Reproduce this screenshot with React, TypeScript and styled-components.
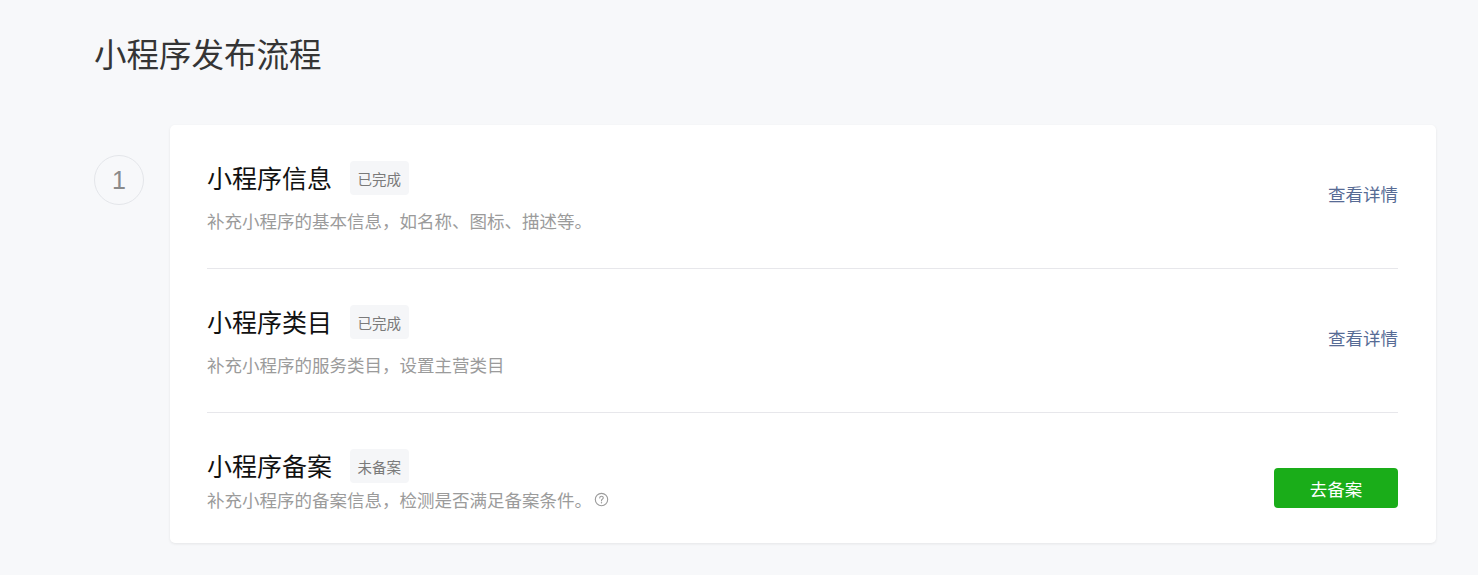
import React from "react";
import styled, { createGlobalStyle } from "styled-components";

const GlobalStyle = createGlobalStyle`
  html, body {
    margin: 0;
    padding: 0;
    background: #f7f8fa;
    font-family: "Noto Sans CJK SC", "Noto Sans", sans-serif;
  }
  * { box-sizing: border-box; }
`;

const Page = styled.div`
  padding: 30px 42px 32px 94px;
  min-height: 575px;
`;

const Heading = styled.h1`
  margin: 0 0 49px 0;
  font-size: 32.5px;
  line-height: 46px;
  font-weight: 400;
  color: #353535;
`;

const Step = styled.div`
  display: flex;
  align-items: flex-start;
  gap: 26px;
`;

const StepNumber = styled.div`
  flex: none;
  width: 50px;
  height: 50px;
  margin-top: 30px;
  border: 1.5px solid #e4e6ea;
  border-radius: 50%;
  display: flex;
  align-items: center;
  justify-content: center;
  font-family: "Liberation Sans", Arial, sans-serif;
  font-size: 25px;
  color: #8a8a8a;
`;

const Card = styled.div`
  flex: 1;
  background: #fff;
  border-radius: 5px;
  box-shadow: 0 1px 3px rgba(0, 0, 0, 0.08);
  padding: 0 38px 0 37px;
`;

const Row = styled.div<{ $last?: boolean }>`
  display: flex;
  align-items: ${(p) => (p.$last ? "flex-end" : "center")};
  justify-content: space-between;
  padding: ${(p) => (p.$last ? "36px 0 31px" : "36px 0 35px")};
  border-bottom: ${(p) => (p.$last ? "none" : "1px solid #e7e7eb")};
`;

const Info = styled.div`
  display: flex;
  flex-direction: column;
`;

const TitleLine = styled.div`
  display: flex;
  align-items: center;
  height: 34px;
`;

const Title = styled.span`
  font-size: 25px;
  line-height: 34px;
  color: #111;
  margin-top: -3px;
`;

const Tag = styled.span`
  margin-left: 18px;
  height: 34px;
  padding: 0 7.5px;
  display: inline-flex;
  align-items: center;
  background: #f5f6f8;
  border-radius: 4px;
  font-size: 14.5px;
  color: #7a7a7a;
`;

const Desc = styled.div<{ $compact?: boolean }>`
  margin-top: ${(p) => (p.$compact ? "4px" : "13px")};
  font-size: 17.5px;
  line-height: 25px;
  color: #9b9b9b;
  display: flex;
  align-items: center;
`;

const HelpIcon = styled.svg`
  margin-left: 2px;
  width: 15px;
  height: 15px;
`;

const Link = styled.a`
  margin-bottom: 7px;
  font-size: 17.5px;
  color: #576b95;
  text-decoration: none;
  cursor: pointer;
`;

const PrimaryButton = styled.button`
  width: 124px;
  height: 40px;
  margin-bottom: 4px;
  border: none;
  border-radius: 4px;
  background: #1aad19;
  color: #fff;
  font-family: inherit;
  font-size: 17.5px;
  cursor: pointer;
`;

const Help = () => (
  <HelpIcon viewBox="0 0 16 16">
    <circle cx="8" cy="8" r="6.6" fill="none" stroke="#9b9b9b" strokeWidth="1.2" />
    <path
      d="M6.1 6.4c0-1.1.85-1.9 1.9-1.9s1.9.75 1.9 1.75c0 .8-.5 1.15-1.05 1.5-.5.3-.85.6-.85 1.25v.4"
      fill="none"
      stroke="#9b9b9b"
      strokeWidth="1.2"
      strokeLinecap="round"
    />
    <circle cx="8" cy="11.4" r="0.75" fill="#9b9b9b" />
  </HelpIcon>
);

export default function App() {
  return (
    <>
      <GlobalStyle />
      <Page>
        <Heading>小程序发布流程</Heading>
        <Step>
          <StepNumber>1</StepNumber>
          <Card>
            <Row>
              <Info>
                <TitleLine>
                  <Title>小程序信息</Title>
                  <Tag>已完成</Tag>
                </TitleLine>
                <Desc>补充小程序的基本信息，如名称、图标、描述等。</Desc>
              </Info>
              <Link>查看详情</Link>
            </Row>
            <Row>
              <Info>
                <TitleLine>
                  <Title>小程序类目</Title>
                  <Tag>已完成</Tag>
                </TitleLine>
                <Desc>补充小程序的服务类目，设置主营类目</Desc>
              </Info>
              <Link>查看详情</Link>
            </Row>
            <Row $last>
              <Info>
                <TitleLine>
                  <Title>小程序备案</Title>
                  <Tag>未备案</Tag>
                </TitleLine>
                <Desc $compact>
                  补充小程序的备案信息，检测是否满足备案条件。
                  <Help />
                </Desc>
              </Info>
              <PrimaryButton>去备案</PrimaryButton>
            </Row>
          </Card>
        </Step>
      </Page>
    </>
  );
}
